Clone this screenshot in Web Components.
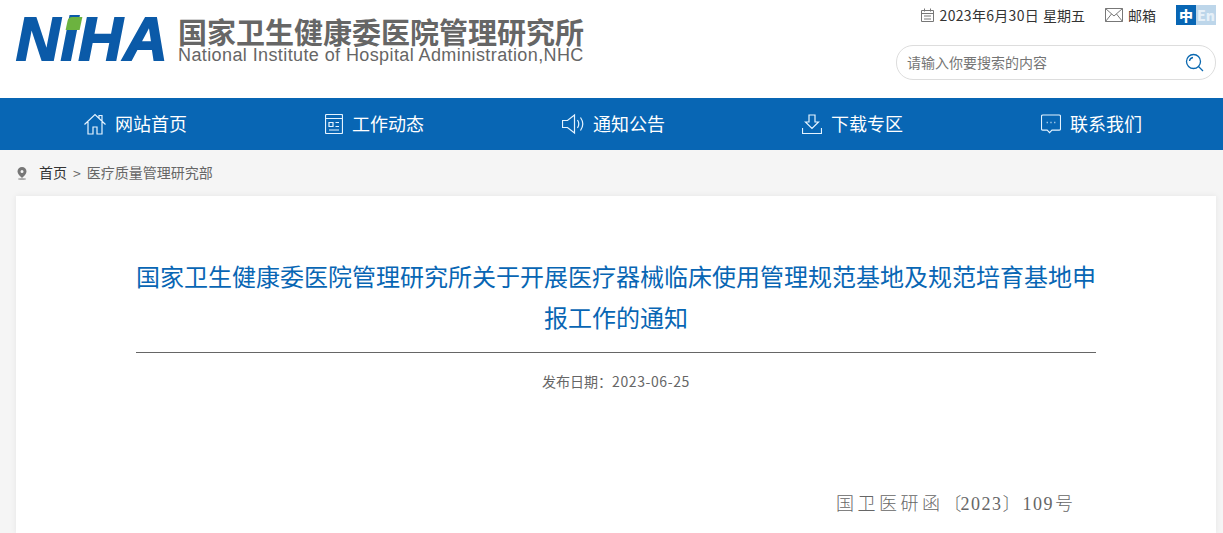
<!DOCTYPE html>
<html lang="zh">
<head>
<meta charset="utf-8">
<title>国家卫生健康委医院管理研究所</title>
<style>
	html, body { margin: 0; height: 533px; overflow: hidden; background: #f5f5f5; }
	body { font-family: "Noto Sans CJK SC", sans-serif; color: #333; }
</style>
</head>
<body>
<niha-header></niha-header>
<niha-nav>
	<niha-nav-item icon="home">网站首页</niha-nav-item>
	<niha-nav-item icon="news">工作动态</niha-nav-item>
	<niha-nav-item icon="sound">通知公告</niha-nav-item>
	<niha-nav-item icon="download">下载专区</niha-nav-item>
	<niha-nav-item icon="chat">联系我们</niha-nav-item>
</niha-nav>
<niha-crumbs></niha-crumbs>
<niha-article date="2023-06-25">国家卫生健康委医院管理研究所关于开展医疗器械临床使用管理规范基地及规范培育基地申报工作的通知</niha-article>

<script>
(function() {
	// w/h are the drawn size, vb crops the 24 grid so the gap to the label stays 9px
	const ICONS = {
		home: { w: 22, h: 22, vb: "1 1 22 22", d: '<path d="M1.500 12.500 12 2.500l10.500 10M5 10v12h5v-7h4v7h5V10M16 6V3.500h3v6"/>' },
		news: { w: 18, h: 20, vb: "3 2 18 20", d: '<rect x="3.500" y="2.500" width="17" height="19" rx="1"/><path d="M3.500 6.500h17M7 10.500h4v4H7zM13.500 10.500H17M13.500 14.500H17M7 18h10"/>' },
		sound: { w: 22, h: 22, vb: "1.500 1 22 22", d: '<path d="M2 8.500h5L14 3v18l-7-5.500H2zM17 8c1.600 2.500 1.600 5.500 0 8M20 5.500c2.800 4 2.800 9 0 13"/>' },
		download: { w: 20, h: 20, vb: "2 2 20 20", d: '<path d="M9 3h6v7h3.500L12 16.500 5.500 10H9zM2.500 16v5.500h19V16"/>' },
		chat: { w: 20, h: 20, vb: "2 2.500 21 21", d: '<path d="M4 3.500h17a1.500 1.500 0 0 1 1.500 1.500v13a1.500 1.500 0 0 1-1.500 1.500h-7.500L11 22l-2.500-2.500H4A1.500 1.500 0 0 1 2.500 18V5A1.500 1.500 0 0 1 4 3.500z"/><path d="M8 11.500h1M12 11.500h1M16 11.500h1" stroke-width="1.600"/>' }
	};

	class NihaHeader extends HTMLElement {
		constructor() {
			super();
			this.attachShadow({mode: "open"}).innerHTML = `
			<style>
			:host { display: flex; height: 98px; background: #fff; justify-content: space-between; box-sizing: border-box; padding: 0 7px 0 16px; }
			.logo { display: flex; align-items: flex-start; padding-top: 17px; }
			.mark { position: relative; width: 162px; height: 44px; font: italic 700 61px/44px "Liberation Sans", sans-serif; color: #0b5aa8; letter-spacing: .8px; -webkit-text-stroke: 2px #0b5aa8; }
			.mark i { position: absolute; left: 51px; top: 0; width: 14px; height: 13px; background: #6cb33f; border-radius: 4px 0 0 0; transform: skewX(-12deg); }
			.names { display: flex; flex-direction: column; color: #666; }
			.cn { font-size: 29px; line-height: 28px; font-weight: 700; white-space: nowrap; }
			.en { font: 18px/20px "Liberation Sans", sans-serif; letter-spacing: .4px; white-space: nowrap; }
			.tools { width: 320px; display: flex; flex-direction: column; align-items: stretch; }
			.top { display: flex; justify-content: flex-end; align-items: center; height: 20px; margin-top: 5px; font-size: 14px; white-space: nowrap; color: #333; }
			.top svg { fill: none; stroke: #777; stroke-width: 1; display: block; }
			.date { margin-right: 20px; display: flex; align-items: center; gap: 5px; }
			.date em { font-style: normal; letter-spacing: .3px; margin-right: 4px; }
			.mail { margin-right: 20px; display: flex; align-items: center; gap: 5px; }
			.lang { display: flex; font-size: 14px; line-height: 20px; font-weight: 700; }
			.lang b { width: 20px; text-align: center; background: #0866b4; color: #fff; }
			.lang b + b { background: #bdd6ea; color: #e6f0f8; }
			.search { margin-top: 20px; height: 33px; border: 1px solid #ddd; border-radius: 17px; display: flex; align-items: center; justify-content: space-between; padding: 0 11px 0 10px; font-size: 14px; line-height: 20px; color: #757575; }
			.search span { margin-top: -2px; }
			.search svg { fill: none; stroke: #0a68b0; stroke-width: 1.300; display: block; }
			</style>
			<div class="logo">
				<div class="mark">NiHA<i></i></div>
				<div class="names">
					<span class="cn">国家卫生健康委医院管理研究所</span>
					<span class="en">National Institute of Hospital Administration,NHC</span>
				</div>
			</div>
			<div class="tools">
				<div class="top">
					<span class="date"><svg width="15" height="15" viewBox="0 0 15 15"><path d="M1.500 2.500h12v11h-12zM4.500.5v3M10.500.5v3M1.500 5.500h12M4 8h7M4 11h7"/></svg><span><em>2023年6月30日</em>星期五</span></span>
					<span class="mail"><svg width="18" height="14" viewBox="0 0 18 14"><path d="M.5.5h17v13H.5zM.5.5 9 8l8.500-7.500M.5 13.500 6.500 6M17.500 13.500 11.500 6"/></svg>邮箱</span>
					<span class="lang"><b>中</b><b>En</b></span>
				</div>
				<div class="search">
					<span>请输入你要搜索的内容</span>
					<svg width="19" height="19" viewBox="0 0 19 19"><circle cx="8.500" cy="8.500" r="7"/><path d="M13.500 13.500 18 18M4.500 8a4 4 0 0 1 3.500-3.500"/></svg>
				</div>
			</div>`;
		}
	}

	class NihaNav extends HTMLElement {
		constructor() {
			super();
			this.attachShadow({mode: "open"}).innerHTML = `
			<style>
			:host { display: grid; grid-template-columns: repeat(5, 239px); height: 52px; background: #0866b4; padding-left: 16px; }
			</style>
			<slot></slot>`;
		}
	}

	class NihaNavItem extends HTMLElement {
		constructor() {
			super();
			var icon = ICONS[this.getAttribute("icon")];
			this.attachShadow({mode: "open"}).innerHTML = `
			<style>
			:host { display: flex; align-items: center; justify-content: center; gap: 9px; color: #fff; font-size: 18px; line-height: 24px; white-space: nowrap; }
			svg { fill: none; stroke: #e4f3ff; stroke-width: 1.200; flex: none; }
			span { margin-top: -2px; }
			</style>
			<svg width="${icon.w}" height="${icon.h}" viewBox="${icon.vb}">${icon.d}</svg>
			<span><slot></slot></span>`;
		}
	}

	class NihaCrumbs extends HTMLElement {
		constructor() {
			super();
			this.attachShadow({mode: "open"}).innerHTML = `
			<style>
			:host { display: flex; align-items: center; height: 46px; padding-left: 17px; font-size: 14px; line-height: 20px; color: #666; white-space: nowrap; }
			svg { display: block; margin-right: 12px; }
			span { margin-top: -2px; }
			.home { color: #333; }
			.sep { margin: 0 6px; }
			</style>
			<svg width="10" height="13" viewBox="0 0 10 13"><path fill="#777" fill-rule="evenodd" d="M5 0a4.500 4.500 0 0 1 4.500 4.500C9.500 7 7 9 5 11 3 9 .5 7 .5 4.500A4.500 4.500 0 0 1 5 0zm0 3a1.500 1.500 0 1 0 0 3 1.500 1.500 0 0 0 0-3z"/><ellipse cx="5" cy="12" rx="4" ry="1" fill="#aaa"/></svg>
			<span class="home">首页</span><span class="sep">&gt;</span><span>医疗质量管理研究部</span>`;
		}
	}

	class NihaArticle extends HTMLElement {
		constructor() {
			super();
			this.attachShadow({mode: "open"}).innerHTML = `
			<style>
			:host { display: block; box-sizing: border-box; width: 1200px; height: 337px; margin-left: 16px; background: #fff; box-shadow: 0 0 6px rgba(0,0,0,.07); padding: 59px 120px 0; }
			h1 { margin: 0; padding-bottom: 15px; border-bottom: 1px solid #666; font-size: 24px; line-height: 41px; font-weight: 400; color: #0866b4; text-align: center; }
			.date { margin-top: 18px; font-size: 14px; line-height: 20px; color: #666; text-align: center; }
			.date em { font-style: normal; letter-spacing: .6px; }
			.doc { margin-top: 101px; padding-left: 700px; white-space: nowrap; font-family: "Liberation Serif", "Noto Sans CJK SC", serif; font-size: 18px; line-height: 24px; font-weight: 300; letter-spacing: 3.500px; color: #666; }
			.doc em { font-style: normal; letter-spacing: 1.500px; }
			.doc u { text-decoration: none; letter-spacing: -1px; }
			.doc u + em + u { letter-spacing: 2px; }
			.doc em:last-of-type { margin-right: 1px; }
			</style>
			<h1><slot></slot></h1>
			<div class="date">发布日期：<em>${this.getAttribute("date")}</em></div>
			<div class="doc">国卫医研函<u>〔</u><em>2023</em><u>〕</u><em>109</em>号</div>`;
		}
	}

	customElements.define("niha-header", NihaHeader);
	customElements.define("niha-nav", NihaNav);
	customElements.define("niha-nav-item", NihaNavItem);
	customElements.define("niha-crumbs", NihaCrumbs);
	customElements.define("niha-article", NihaArticle);
})();
</script>
</body>
</html>
